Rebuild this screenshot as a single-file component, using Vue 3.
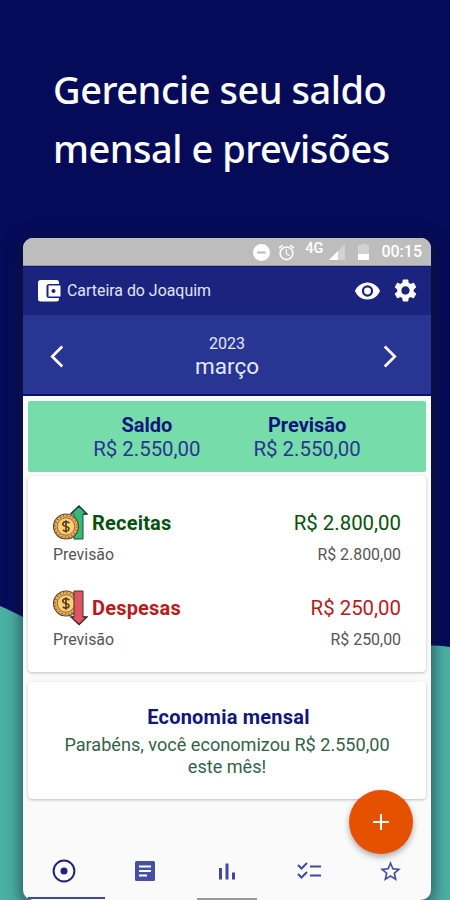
<script setup>
const totals = [
  { label: 'Saldo', value: 'R$ 2.550,00' },
  { label: 'Previsão', value: 'R$ 2.550,00' },
]
const entries = [
  { kind: 'income', label: 'Receitas', value: 'R$ 2.800,00', forecast: 'R$ 2.800,00' },
  { kind: 'expense', label: 'Despesas', value: 'R$ 250,00', forecast: 'R$ 250,00' },
]
</script>

<template>
  <main class="page">
    <svg class="wave" viewBox="0 0 450 900" aria-hidden="true">
      <path d="M0 606 C8 609 15 613 23 617 C120 665 260 650 431 645.500 Q441 645 450 647 V900 H0Z" fill="#4bb1a5" />
    </svg>
    <h1 class="headline">
      <span class="line">Gerencie seu saldo</span>
      <span class="line">mensal e previsões</span>
    </h1>
    <section class="phone">
      <div class="status">
        <svg class="dnd" viewBox="0 0 16 16"><circle cx="8" cy="8" r="8" fill="#fff" /><path d="M4 8h8" stroke="#bdbdbd" stroke-width="2" /></svg>
        <svg class="alarm" viewBox="0 0 24 24"><path fill="#fff" d="M22 5.720l-4.600-3.860-1.290 1.530 4.600 3.860L22 5.720zM7.880 3.390L6.600 1.860 2 5.710l1.290 1.530 4.590-3.850zM12.500 8H11v6l4.750 2.850.75-1.230-4-2.370V8zM12 4a9 9 0 1 0 0 18 9 9 0 0 0 0-18zm0 16a7 7 0 1 1 0-14 7 7 0 0 1 0 14z" /></svg>
        <span class="net">4G</span>
        <svg class="signal" viewBox="0 0 16 16"><path d="M0 16L16 0v16Z" fill="#d2d2d2" /><path d="M0 16L9 7v9Z" fill="#fff" /></svg>
        <svg class="battery" viewBox="0 0 11 16"><path d="M3 0h5v1h3v15H0V1h3Z" fill="#d2d2d2" /><path d="M0 10h11v6H0Z" fill="#fff" /></svg>
        <span class="clock">00:15</span>
      </div>
      <header class="bar">
        <svg class="wallet" viewBox="0 0 23 22"><path fill="#fff" d="M2.500 0H18.500Q21 0 21 2.500V4H11Q8.500 4 8.500 6.500V15.500Q8.500 18 11 18H21V19Q21 21.500 18.500 21.500H2.500Q0 21.500 0 19V2.500Q0 0 2.500 0Z" /><path fill="#fff" fill-rule="evenodd" d="M10.500 5.500H22.500V16.500H10.500ZM15.500 9a2 2 0 1 0 .01 0Z" /></svg>
        <span class="owner">Carteira do Joaquim</span>
        <svg class="eye" viewBox="1 4.500 22 15"><path fill="#fff" d="M12 4.500C7 4.500 2.730 7.610 1 12c1.730 4.390 6 7.500 11 7.500s9.270-3.110 11-7.500c-1.730-4.390-6-7.500-11-7.500zM12 17a5 5 0 1 1 0-10 5 5 0 0 1 0 10zm0-8a3 3 0 1 0 0 6 3 3 0 0 0 0-6z" /></svg>
        <svg class="gear" viewBox="2 2 20 20"><path fill="#fff" d="M19.140 12.940c.04-.3.060-.61.060-.94 0-.32-.02-.64-.07-.94l2.030-1.580a.49.49 0 0 0 .12-.61l-1.920-3.320a.488.488 0 0 0-.59-.22l-2.390.96c-.5-.38-1.030-.7-1.620-.94l-.36-2.540a.484.484 0 0 0-.48-.41h-3.840c-.24 0-.43.17-.47.41l-.36 2.540c-.59.24-1.130.57-1.620.94l-2.390-.96c-.22-.08-.47 0-.59.22L2.740 8.870c-.12.21-.08.47.12.61l2.030 1.580c-.05.3-.09.63-.09.94s.02.64.07.94l-2.030 1.580a.49.49 0 0 0-.12.61l1.920 3.320c.12.22.37.29.59.22l2.390-.96c.5.38 1.030.7 1.620.94l.36 2.540c.05.24.24.41.48.41h3.840c.24 0 .44-.17.47-.41l.36-2.540c.59-.24 1.130-.56 1.620-.94l2.390.96c.22.08.47 0 .59-.22l1.920-3.320c.12-.22.07-.47-.12-.61l-2.010-1.580zM12 15.600A3.610 3.610 0 0 1 8.400 12c0-1.980 1.620-3.600 3.600-3.600s3.600 1.620 3.600 3.600-1.620 3.600-3.600 3.600z" /></svg>
      </header>
      <nav class="month">
        <svg class="chev" viewBox="0 0 14 24"><path d="M12.500 1.500L2 12l10.500 10.500" fill="none" stroke="#fff" stroke-width="2.800" /></svg>
        <div class="date"><span class="year">2023</span><span class="name">março</span></div>
        <svg class="chev" viewBox="0 0 14 24"><path d="M1.500 1.500L12 12L1.500 22.500" fill="none" stroke="#fff" stroke-width="2.800" /></svg>
      </nav>
      <div class="content">
        <section class="balance">
          <div v-for="t in totals" :key="t.label" class="total">
            <strong class="total-label">{{ t.label }}</strong>
            <span class="amount">{{ t.value }}</span>
          </div>
        </section>
        <section class="card flows">
          <article v-for="e in entries" :key="e.kind" class="entry" :class="e.kind">
            <div class="row main">
              <svg class="coin" viewBox="0 0 35 36">
                <g v-if="e.kind === 'income'">
                  <path d="M26 1L34 9H30V34H21V9H18Z" fill="#35bb78" stroke="#29443c" stroke-width="1" />
                  <path d="M17.500 9L26 1L34 9H30" fill="none" stroke="#263a36" stroke-width="1.500" />
                  <circle cx="13" cy="21.500" r="12.500" fill="#e9ae55" stroke="#5b452d" stroke-width="1.200" />
                  <circle cx="13" cy="21.500" r="10.800" fill="none" stroke="#775936" stroke-width="1.500" stroke-dasharray="1 2.400" />
                  <circle cx="13" cy="21.500" r="8.700" fill="#ffcf78" stroke="#76552e" stroke-width=".8" />
                  <path d="M16.500 18Q13 15.500 10.500 17.500C8.500 20 11 21 13 21.500C16 22 17 24 15 25.500Q12.500 27 9.800 24.800M13 15.300V27.700" fill="none" stroke="#594128" stroke-width="1.700" />
                </g>
                <g v-else>
                  <circle cx="13" cy="13.500" r="12.500" fill="#e9ae55" stroke="#5b452d" stroke-width="1.200" />
                  <circle cx="13" cy="13.500" r="10.800" fill="none" stroke="#775936" stroke-width="1.500" stroke-dasharray="1 2.400" />
                  <circle cx="13" cy="13.500" r="8.700" fill="#ffcf78" stroke="#76552e" stroke-width=".8" />
                  <path d="M16.500 10Q13 7.500 10.500 9.500C8.500 12 11 13 13 13.500C16 14 17 16 15 17.500Q12.500 19 9.800 16.800M13 7.300V19.700" fill="none" stroke="#594128" stroke-width="1.700" />
                  <path d="M21 1H30V27H34L26 35L18 27H21Z" fill="#dc5761" stroke="#4e3034" stroke-width="1" />
                  <path d="M21 27H18L26 34.500L34 27H30" fill="none" stroke="#492f32" stroke-width="1.400" />
                </g>
              </svg>
              <strong class="entry-label">{{ e.label }}</strong>
              <span class="amount">{{ e.value }}</span>
            </div>
            <div class="row sub"><span>Previsão</span><span>{{ e.forecast }}</span></div>
          </article>
        </section>
        <section class="card saving">
          <strong class="saving-title">Economia mensal</strong>
          <p class="saving-text">Parabéns, você economizou R$ 2.550,00<br>este mês!</p>
        </section>
      </div>
      <button class="fab" aria-label="Adicionar"><svg viewBox="0 0 16 16"><path d="M8 0v16M0 8h16" stroke="#fff" stroke-width="2" /></svg></button>
      <nav class="tabs">
        <span class="tab"><svg viewBox="0 0 24 24"><circle cx="12" cy="12" r="10.400" fill="none" stroke="#1a237e" stroke-width="2" /><circle cx="12" cy="12" r="3.500" fill="#1a237e" /></svg></span>
        <span class="tab"><svg viewBox="0 0 24 24"><rect x="2" y="2" width="20" height="20" rx="1.500" fill="#4550a2" /><path d="M6 7.500h12M6 12h12M6 16.500h8" stroke="#fff" stroke-width="2" /></svg></span>
        <span class="tab"><svg viewBox="0 0 24 24"><path d="M5.500 9v11.500M12 4.500v16M18.500 13.500v7" stroke="#4048a0" stroke-width="3" /></svg></span>
        <span class="tab"><svg viewBox="0 0 24 24"><path d="M13 7.500h11M13 16.500h11" stroke="#4048a0" stroke-width="2" /><path d="M1 6l3.500 3.500 5.500-5.500M1 15l3.500 3.500 5.500-5.500" fill="none" stroke="#4048a0" stroke-width="2" /></svg></span>
        <span class="tab"><svg class="star" viewBox="0 0 24 24"><path fill="#4550a2" d="M22 9.240l-7.190-.62L12 2 9.190 8.630 2 9.240l5.460 4.730L5.820 21 12 17.270 18.180 21l-1.630-7.030L22 9.240zM12 15.400l-3.760 2.270 1-4.280-3.320-2.880 4.380-.38L12 6.100l1.710 4.040 4.380.38-3.320 2.880 1 4.280L12 15.400z" /></svg></span>
      </nav>
      <div class="indicators"><span class="selected"></span><span class="handle"></span></div>
    </section>
  </main>
</template>

<style>
body { margin: 0; }
</style>

<style scoped>
* { box-sizing: border-box; }
svg { display: block; flex: none; }
.page { position: relative; width: 450px; height: 900px; overflow: hidden; background: #050b59; font-family: Roboto, sans-serif; }
.wave { position: absolute; inset: 0; width: 450px; height: 900px; }
.headline { position: relative; height: 238px; margin: 0; padding: 60px 0 0 53px; color: #fff; font: 500 38px/59px "Noto Sans", sans-serif; }
.line { display: block; white-space: nowrap; letter-spacing: -.5px; }
.phone { position: relative; display: flex; flex-direction: column; width: 408px; height: 662px; margin-left: 23px; background: #fafafa; border-radius: 10px; box-shadow: 0 4px 16px 2px rgba(20, 24, 35, .62); }
.status { display: flex; align-items: center; justify-content: flex-end; height: 28px; padding: 1px 9px 0 0; background: #bdbdbd; border-bottom: 1px solid #9899a8; border-radius: 10px 10px 0 0; color: #fff; }
.dnd { width: 17px; height: 17px; margin-right: 7px; }
.alarm { width: 19px; height: 19px; margin-right: 9px; }
.net { margin: -7px 6px 0 0; font-size: 14.500px; font-weight: 500; line-height: 16px; }
.signal { width: 16px; height: 16px; margin-right: 13px; }
.battery { width: 11px; height: 16px; margin-right: 12px; }
.clock { font-size: 16px; font-weight: 500; line-height: 20px; }
.bar { display: flex; align-items: center; height: 49px; padding: 0 14px 1px 15px; background: #1a237e; border-top: 1px solid #101575; }
.wallet { width: 23px; height: 22px; margin-right: 6px; }
.owner { flex: 1; color: #e2e5fa; font-size: 15.900px; line-height: 20px; }
.eye { width: 25px; height: 18px; margin-right: 14px; }
.gear { width: 23px; height: 23px; }
.month { display: flex; align-items: center; justify-content: space-between; height: 81px; padding: 3px 34px 0 27px; background: #283593; border-bottom: 2px solid #081078; }
.chev { width: 14px; height: 23px; }
.date { display: flex; flex-direction: column; align-items: center; padding-left: 7px; color: #e5e8ff; }
.year { font-size: 16px; line-height: 20px; }
.name { font-size: 22.500px; line-height: 25px; }
.content { height: 404px; padding: 5px; }
.balance { display: flex; height: 71px; justify-content: center; gap: 53px; padding-top: 12px; background: #76dcaa; border-radius: 2px; color: #283593; }
.total { display: flex; flex-direction: column; align-items: center; }
.total-label { color: #10157f; font-size: 20px; line-height: 24px; }
.amount { font-size: 20.400px; line-height: 24px; white-space: nowrap; }
.card { background: #fff; border-radius: 4px; box-shadow: 0 1px 3px rgba(0, 0, 0, .24); }
.flows { height: 196px; margin-top: 4px; padding: 28px 25px 0; }
.entry { height: 85px; }
.row { display: flex; align-items: center; }
.main { height: 37px; }
.coin { width: 35px; height: 36px; margin-right: 4px; }
.entry-label { flex: 1; font-size: 20px; line-height: 24px; letter-spacing: .2px; }
.income { color: #08510c; }
.expense { color: #b71c1c; }
.sub { justify-content: space-between; height: 26px; color: #555; font-size: 15.900px; }
.saving { height: 117px; margin-top: 10px; padding-top: 23px; text-align: center; }
.saving-title { padding-left: 3px; color: #10157f; font-size: 20px; line-height: 24px; letter-spacing: .22px; }
.saving-text { margin: 5px 0 0; color: #355f4b; font-size: 18.100px; line-height: 22px; }
.fab { position: absolute; left: 326px; top: 552px; display: grid; place-items: center; width: 64px; height: 64px; padding: 0; border: 0; border-radius: 50%; background: #e65100; box-shadow: 0 3px 6px rgba(0, 0, 0, .32); }
.fab svg { width: 16px; height: 16px; }
.tabs { display: grid; grid-template-columns: repeat(5, 1fr); height: 55px; margin-top: 42px; padding-top: 3px; }
.tab { display: grid; place-items: center; }
.tab svg { width: 24px; height: 24px; }
.tab .star { width: 25px; height: 25px; }
.indicators { display: flex; height: 3px; padding-left: 5px; }
.selected { width: 77px; height: 2px; background: #3f4aa0; }
.handle { width: 60px; height: 2px; margin: 1px 0 0 92px; background: #999; }
</style>
